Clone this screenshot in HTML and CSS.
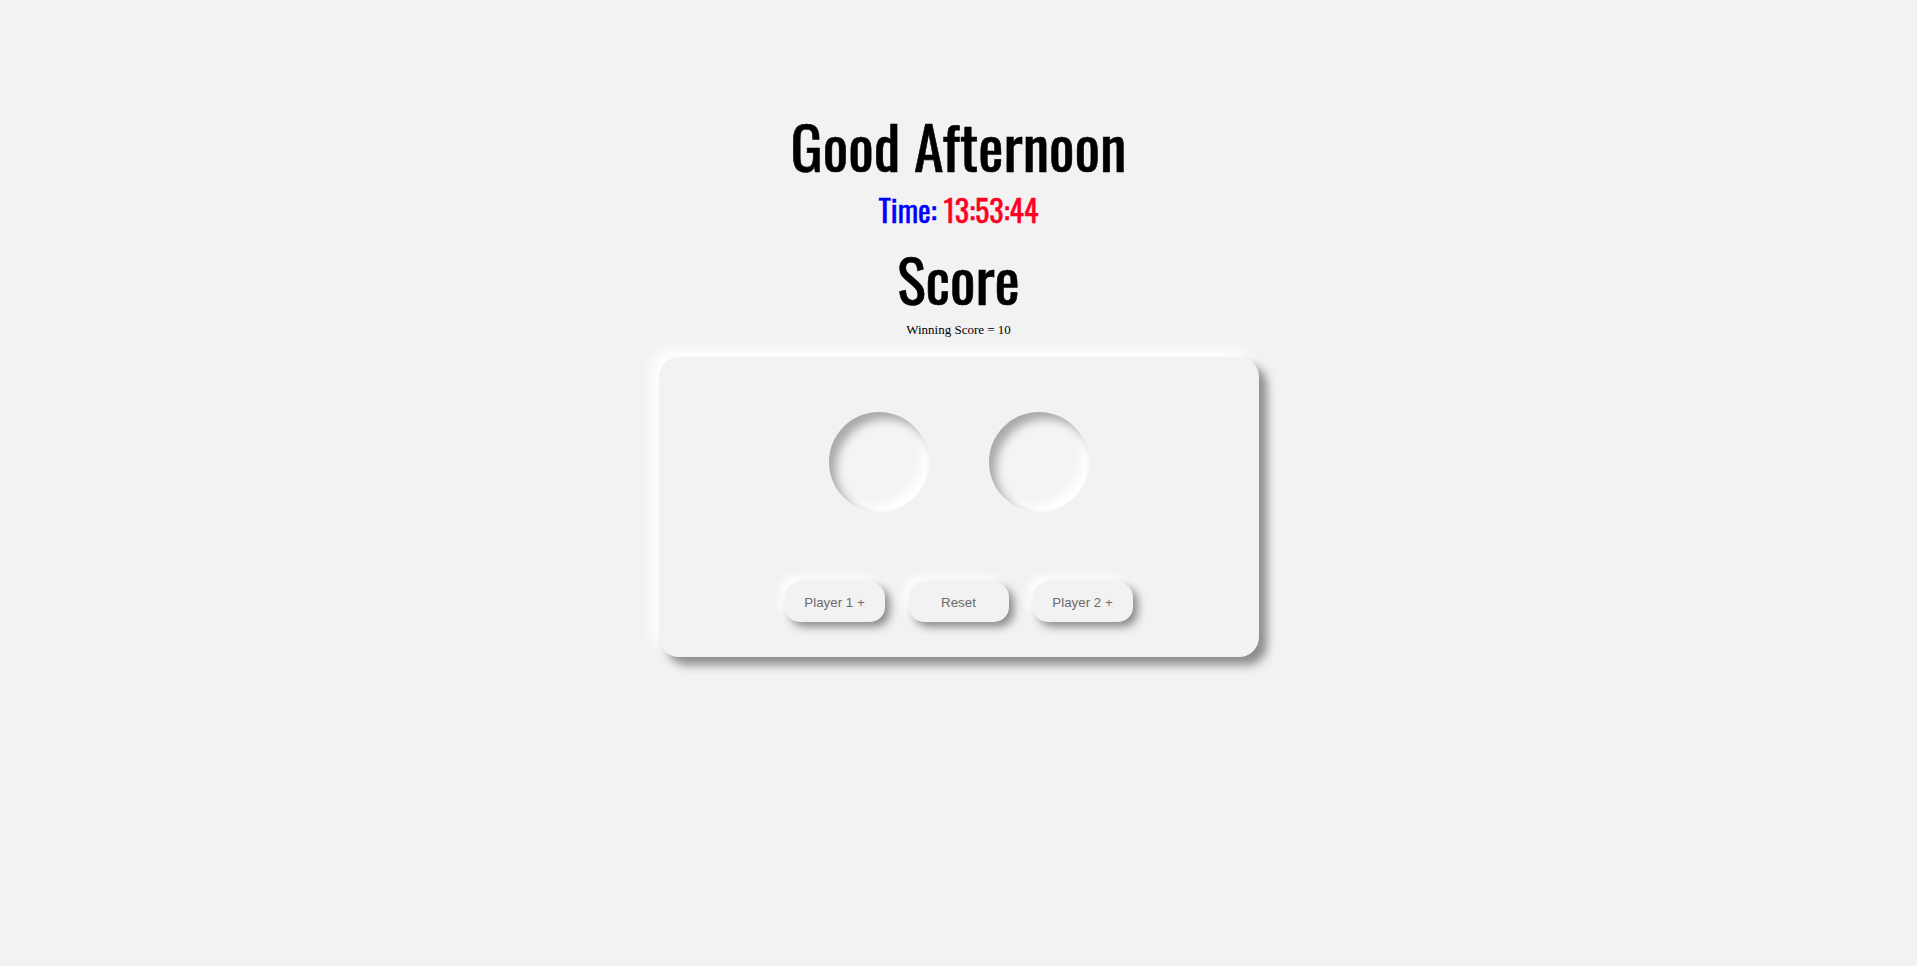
FILE: index.html
```html
<!DOCTYPE html>
<html>
<head>
<meta charset="utf-8">
<link rel="stylesheet" href="styles.css">
</head>
<body>
<main class="page">
  <h1 class="greeting">Good Afternoon</h1>
  <div class="clock"><span class="clock-label">Time:</span> <span class="clock-value">13:53:44</span></div>
  <h2 class="score-title">Score</h2>
  <p class="winning">Winning Score = 10</p>
  <section class="board">
    <div class="dials">
      <div class="dial"></div>
      <div class="dial"></div>
    </div>
    <div class="controls">
      <button class="btn">Player 1 +</button>
      <button class="btn">Reset</button>
      <button class="btn">Player 2 +</button>
    </div>
  </section>
</main>
</body>
</html>
```
FILE: styles.css
```css
html, body {
  margin: 0;
  padding: 0;
  background: #f2f2f2;
}
body {
  font-family: "Liberation Serif", "Times New Roman", serif;
  min-height: 100vh;
}
.page {
  display: flex;
  flex-direction: column;
  align-items: center;
  padding-top: 107px;
  min-height: 100vh;
  box-sizing: border-box;
}
.greeting, .clock, .score-title {
  font-family: "Oswald", "Liberation Sans Narrow", "DejaVu Sans Condensed", sans-serif;
  font-weight: 400;
  white-space: nowrap;
  -webkit-text-stroke: 0.6px currentColor;
}
.greeting {
  margin: 0;
  font-size: 60px;
  line-height: 76px;
  color: #000;
}
.clock {
  margin: 7px 0 0;
  font-size: 30px;
  line-height: 40px;
  -webkit-text-stroke-width: 0.4px;
}
.clock-label { color: #0000ff; }
.clock-value { color: #ff0022; }
.score-title {
  margin: 12px 0 0;
  font-size: 60px;
  line-height: 72px;
  color: #000;
}
.winning {
  margin: 8px 0 0;
  font-size: 13px;
  line-height: 16px;
  color: #000;
}
.board {
  margin-top: 19px;
  width: 600px;
  height: 300px;
  box-sizing: border-box;
  border-radius: 20px;
  background: #f2f2f2;
  box-shadow: 8px 8px 10px #8d8d8d, -8px -8px 14px #ffffff;
  display: flex;
  flex-direction: column;
  align-items: center;
  padding-top: 55px;
}
.dials {
  display: flex;
  gap: 60px;
}
.dial {
  width: 100px;
  height: 100px;
  border-radius: 50%;
  background: #f4f4f4;
  box-shadow: inset 7px 7px 10px #a9a9a9, inset -7px -7px 10px #ffffff;
}
.controls {
  margin-top: 70px;
  display: flex;
  gap: 24px;
}
.btn {
  width: 100px;
  height: 40px;
  border: none;
  border-radius: 15px;
  background: #f2f2f2;
  color: #6b6b6b;
  font-family: "Liberation Sans", Arial, sans-serif;
  font-size: 13.33px;
  box-shadow: 5px 5px 8px #8d8d8d, -5px -5px 10px #ffffff;
  padding: 0;
}
```
